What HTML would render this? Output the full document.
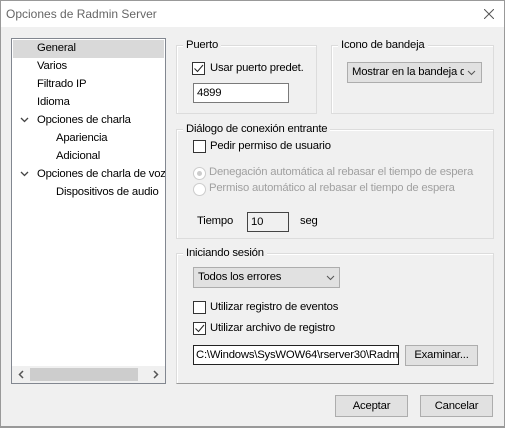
<!DOCTYPE html>
<html><head><meta charset="utf-8"><style>
*{box-sizing:border-box;margin:0;padding:0}
body{width:505px;height:428px;background:#f0f0f0;font-family:"Liberation Sans",sans-serif;font-size:11.3px;letter-spacing:-0.2px;color:#000;position:relative;overflow:hidden;border:1px solid #999;border-bottom:2px solid #999}
.a{position:absolute;white-space:nowrap}
.title{left:0;top:0;width:503px;height:26px;background:#fff}
.grp{position:absolute;border:1px solid #dcdcdc;box-shadow:inset 1px 1px 0 #fff}
.gl{position:absolute;background:#f0f0f0;padding:0 3px;top:-8px;left:6px;line-height:14px}
.cb{position:absolute;width:13px;height:13px;border:1px solid #333;background:#fff}
.cb svg{position:absolute;left:0;top:0}
.rd{position:absolute;width:13px;height:13px;border:1px solid #ccc;border-radius:50%;background:#fff}
.in{position:absolute;border:1px solid #7a7a7a;background:#fff;padding-left:3px;line-height:18px}
.btn{position:absolute;background:#e1e1e1;border:1px solid #adadad;text-align:center;line-height:19px}
.gray{color:#a0a0a0}
</style></head><body>
<div class="a title"></div>
<div class="a" style="left:5px;top:6px;font-size:12px;letter-spacing:0;color:#666">Opciones de Radmin Server</div>
<svg class="a" style="left:483px;top:8px" width="10" height="10"><path d="M0 0L10 10M10 0L0 10" stroke="#555" stroke-width="1"/></svg>

<div class="a" style="left:10px;top:37px;width:155px;height:346px;background:#fff;border:1px solid #828790"></div>
<div class="a" style="left:12px;top:39px;width:151px;height:18px;background:#d9d9d9"></div>
<div class="a" style="left:36px;top:41px">General</div>
<div class="a" style="left:36px;top:59px">Varios</div>
<div class="a" style="left:36px;top:77px">Filtrado IP</div>
<div class="a" style="left:36px;top:95px">Idioma</div>
<svg class="a" style="left:19px;top:116px" width="9" height="6"><path d="M1 1L4.5 4.5L8 1" stroke="#444" fill="none" stroke-width="1.3"/></svg>
<div class="a" style="left:36px;top:113px">Opciones de charla</div>
<div class="a" style="left:55px;top:131px">Apariencia</div>
<div class="a" style="left:55px;top:149px">Adicional</div>
<svg class="a" style="left:19px;top:170px" width="9" height="6"><path d="M1 1L4.5 4.5L8 1" stroke="#444" fill="none" stroke-width="1.3"/></svg>
<div class="a" style="left:36px;top:167px;width:128px;overflow:hidden">Opciones de charla de voz</div>
<div class="a" style="left:55px;top:185px;width:109px;overflow:hidden">Dispositivos de audio</div>
<div class="a" style="left:11px;top:365px;width:153px;height:17px;background:#f0f0f0"></div>
<div class="a" style="left:29px;top:367px;width:108px;height:13px;background:#cdcdcd"></div>
<svg class="a" style="left:17px;top:369px" width="6" height="9"><path d="M5 1L1.5 4.5L5 8" stroke="#555" fill="none" stroke-width="1.5"/></svg>
<svg class="a" style="left:152px;top:369px" width="6" height="9"><path d="M1 1L4.5 4.5L1 8" stroke="#555" fill="none" stroke-width="1.5"/></svg>

<div class="grp" style="left:175px;top:44px;width:141px;height:69px"><div class="gl">Puerto</div></div>
<div class="cb" style="left:191px;top:61px"><svg width="11" height="11"><path d="M1.5 5.5L4.5 8.5L10 2" stroke="#222" fill="none" stroke-width="1"/></svg></div>
<div class="a" style="left:209px;top:61px">Usar puerto predet.</div>
<div class="in" style="left:192px;top:82px;width:96px;height:20px">4899</div>

<div class="grp" style="left:330px;top:44px;width:163px;height:69px"><div class="gl">Icono de bandeja</div></div>
<div class="a" style="left:346px;top:61px;width:135px;height:21px;background:#e1e1e1;border:1px solid #adadad;padding-left:4px;line-height:19px;overflow:hidden"><span style="display:inline-block;width:112px;overflow:hidden">Mostrar en la bandeja de</span></div>
<svg class="a" style="left:466px;top:69px" width="9" height="6"><path d="M1 1L4.5 4.5L8 1" stroke="#555" fill="none"/></svg>

<div class="grp" style="left:175px;top:128px;width:318px;height:110px"><div class="gl">Diálogo de conexión entrante</div></div>
<div class="cb" style="left:192px;top:139px"></div>
<div class="a" style="left:209px;top:139px">Pedir permiso de usuario</div>
<div class="rd" style="left:192px;top:166px"><div style="position:absolute;left:3px;top:3px;width:5px;height:5px;border-radius:50%;background:#ccc"></div></div>
<div class="a gray" style="left:208px;top:165px">Denegación automática al rebasar el tiempo de espera</div>
<div class="rd" style="left:192px;top:182px"></div>
<div class="a gray" style="left:208px;top:181px">Permiso automático al rebasar el tiempo de espera</div>
<div class="a" style="left:196px;top:214px">Tiempo</div>
<div class="in" style="left:246px;top:211px;width:42px;height:20px;background:#f0f0f0;border-color:#444">10</div>
<div class="a" style="left:299px;top:214px">seg</div>

<div class="grp" style="left:175px;top:252px;width:318px;height:131px;border-bottom:1px solid #999"><div class="gl">Iniciando sesión</div></div>
<div class="a" style="left:192px;top:266px;width:147px;height:21px;background:#e1e1e1;border:1px solid #adadad;padding-left:4px;line-height:19px">Todos los errores</div>
<svg class="a" style="left:325px;top:274px" width="9" height="6"><path d="M1 1L4.5 4.5L8 1" stroke="#555" fill="none"/></svg>
<div class="cb" style="left:192px;top:300px"></div>
<div class="a" style="left:209px;top:300px">Utilizar registro de eventos</div>
<div class="cb" style="left:192px;top:321px"><svg width="11" height="11"><path d="M1.5 5.5L4.5 8.5L10 2" stroke="#222" fill="none" stroke-width="1"/></svg></div>
<div class="a" style="left:209px;top:321px">Utilizar archivo de registro</div>
<div class="in" style="left:192px;top:344px;width:206px;height:20px;overflow:hidden;border-color:#222;padding-left:2px">C:\Windows\SysWOW64\rserver30\Radmin.log</div>
<div class="btn" style="left:404px;top:344px;width:73px;height:21px">Examinar...</div>

<div class="btn" style="left:334px;top:394px;width:73px;height:22px;line-height:20px">Aceptar</div>
<div class="btn" style="left:419px;top:394px;width:73px;height:22px;line-height:20px">Cancelar</div>
</body></html>
